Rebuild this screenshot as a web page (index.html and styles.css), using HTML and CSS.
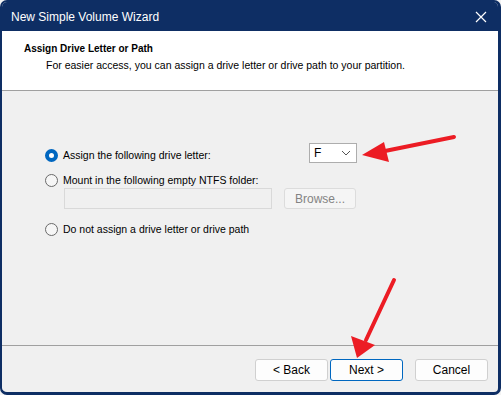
FILE: index.html
```html
<!DOCTYPE html>
<html>
<head>
<meta charset="utf-8">
<link rel="stylesheet" href="styles.css">
</head>
<body>
<div class="window">
  <div class="titlebar">
    <span class="title">New Simple Volume Wizard</span>
    <svg class="close" width="12" height="12" viewBox="0 0 12 12"><path d="M1 1 L11 11 M11 1 L1 11" stroke="#fff" stroke-width="1.2"/></svg>
  </div>
  <div class="header">
    <div class="h-title">Assign Drive Letter or Path</div>
    <div class="h-sub">For easier access, you can assign a drive letter or drive path to your partition.</div>
  </div>
  <div class="content">
    <div class="row row1">
      <label class="opt"><span class="radio checked"></span>Assign the following drive letter:</label>
      <div class="combo"><span>F</span><svg width="10" height="6" viewBox="0 0 10 6"><path d="M1 1 L5 5 L9 1" fill="none" stroke="#555" stroke-width="1"/></svg></div>
    </div>
    <div class="row row2">
      <label class="opt"><span class="radio"></span>Mount in the following empty NTFS folder:</label>
    </div>
    <div class="row row-field">
      <div class="field"></div>
      <div class="btn disabled browse">Browse...</div>
    </div>
    <div class="row row3">
      <label class="opt"><span class="radio"></span>Do not assign a drive letter or drive path</label>
    </div>
  </div>
  <div class="footer">
    <div class="btn">&lt; Back</div>
    <div class="btn default">Next &gt;</div>
    <div class="btn cancel">Cancel</div>
  </div>
  <svg class="arrows" width="501" height="395" viewBox="0 0 501 395">
    <line x1="454" y1="137" x2="380" y2="152" stroke="#ec1c24" stroke-width="4" stroke-linecap="round"/>
    <polygon points="362,155 384,142 389,162" fill="#ec1c24"/>
    <line x1="394" y1="280" x2="366" y2="340" stroke="#ec1c24" stroke-width="4" stroke-linecap="round"/>
    <polygon points="357,358 351,336 375,345" fill="#ec1c24"/>
  </svg>
</div>
</body>
</html>
```
FILE: styles.css
```css
* { box-sizing: border-box; }
html, body { margin: 0; padding: 0; background: #f3f3f3; }
body { font-family: "Liberation Sans", Arial, sans-serif; font-size: 10.5px; color: #000; }
.window {
  position: relative;
  width: 501px; height: 395px;
  border: 2px solid #0e2e64;
  border-right-width: 3px;
  border-bottom-width: 3px;
  border-radius: 7px;
  background: #f0f0f0;
  display: flex; flex-direction: column;
  overflow: hidden;
}
.titlebar {
  height: 29px; flex: none;
  background: #0e2e64;
  color: #fff;
  display: flex; align-items: center;
  padding-left: 9px; padding-right: 11px;
}
.title { font-size: 12px; flex: 1; }
.close { flex: none; }
.header {
  height: 60px; flex: none;
  background: #fff;
  border-bottom: 1px solid #a0a0a0;
  padding: 11px 0 0 22px;
}
.h-title { font-weight: bold; font-size: 10px; line-height: 13px; }
.h-sub { margin-top: 4px; padding-left: 22px; line-height: 13px; }
.content {
  height: 255px; flex: none;
  border-bottom: 1px solid #a0a0a0;
  padding: 52px 0 0 43px;
  display: flex; flex-direction: column;
}
.row { display: flex; align-items: center; }
.row1 { height: 20px; }
.row1 .opt { padding-top: 4px; }
.row2 { height: 14px; margin-top: 10px; }
.row-field { height: 21px; margin-top: 1px; padding-left: 19px; }
.row3 { height: 14px; margin-top: 13px; }
.opt { display: flex; align-items: center; }
.row1 .opt { width: 264px; }
.radio {
  width: 13px; height: 13px; border-radius: 50%;
  border: 1px solid #6a6a6a; background: #f6f6f6;
  margin-right: 5px; flex: none;
}
.radio.checked {
  border: 4px solid #0067c0; background: #fff;
}
.combo {
  width: 48px; height: 20px;
  border: 1px solid #adadad; background: #fff;
  display: flex; align-items: center; justify-content: space-between;
  padding: 0 5px 0 4px;
  font-size: 12px;
}
.field {
  width: 208px; height: 21px;
  border: 1px solid #d9d9d9; background: #f0f0f0;
}
.btn {
  width: 73px; height: 22px;
  border: 1px solid #d0d0d0; border-radius: 3px;
  background: #fdfdfd;
  display: flex; align-items: center; justify-content: center;
  font-size: 12px;
}
.btn.disabled { color: #838383; background: #f5f5f5; border-color: #dcdcdc; }
.browse { width: 72px; height: 21px; margin-left: 12px; }
.btn.default { border-color: #0067c0; }
.footer {
  flex: 1;
  display: flex; justify-content: flex-end;
  padding: 13px 10px 0 0;
  gap: 2px;
}
.cancel { margin-left: 10px; }
.arrows { position: absolute; left: -2px; top: -2px; pointer-events: none; }
```
